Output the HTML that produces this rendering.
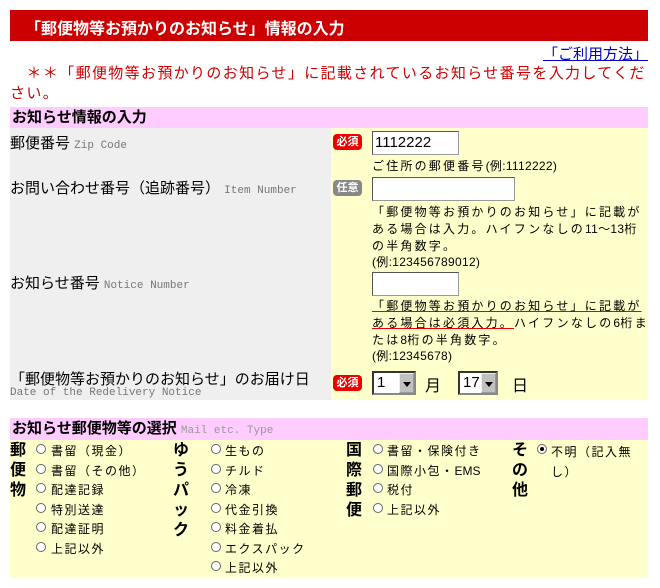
<!DOCTYPE html>
<html><head><meta charset="utf-8"><style>
*{margin:0;padding:0;box-sizing:border-box}
body{width:660px;height:588px;background:#fff;position:relative;font-family:"Liberation Sans","Noto Sans CJK JP",sans-serif;color:#000;overflow:hidden}
.a{position:absolute;white-space:nowrap}
.mono{font-family:"Liberation Mono","Noto Sans CJK JP",monospace;color:#777;font-size:11px}
.note{font-size:12px;line-height:17px;letter-spacing:2.2px}
.note .n{letter-spacing:0.3px}
.badge{position:absolute;width:29px;height:16px;border-radius:4px;color:#fff;font-size:11px;font-weight:bold;text-align:center;line-height:16px}
.inp{position:absolute;background:#fff;border:1px solid #999;border-top-color:#555;border-left-color:#555;font-size:15px;padding-left:2px;line-height:21px}
.sel{position:absolute;background:#fff;border:2px inset #888;font-size:15px;height:24px;line-height:20px;padding-left:3px}
.sel b{position:absolute;right:0;top:0;width:15px;height:20px;background:#c0c0c0;border:1px outset #eee}
.sel b:after{content:"";position:absolute;left:3px;top:8px;border:4px solid transparent;border-top:5px solid #000;border-bottom:0}
.r{position:absolute;width:10px;height:10px;border:1px solid #666;border-radius:50%;background:#fff}
.rl{position:absolute;font-size:12px;white-space:nowrap;letter-spacing:1.5px}
.v{position:absolute;font-size:16px;font-weight:bold;line-height:20px;width:18px}
</style></head><body>
<div class="a" style="left:10px;top:10px;width:638px;height:31px;background:#cc0000"></div>
<div class="a" style="left:25px;top:15px;color:#fff;font-size:16px;font-weight:bold">「郵便物等お預かりのお知らせ」情報の入力</div>
<div class="a" style="right:12px;top:43px;font-size:15px;color:#00c;text-decoration:underline">「ご利用方法」</div>
<div class="a" style="left:10px;top:64px;font-size:15px;color:#cc0000;line-height:20px;letter-spacing:1.35px">&nbsp;&nbsp;&nbsp;＊＊「郵便物等お預かりのお知らせ」に記載されているお知らせ番号を入力してくだ<br>さい。</div>
<div class="a" style="left:10px;top:107px;width:638px;height:21px;background:#fcf"></div>
<div class="a" style="left:12px;top:107px;font-size:15px;font-weight:bold;line-height:21px">お知らせ情報の入力</div>
<div class="a" style="left:10px;top:128px;width:321px;height:272px;background:#efefef"></div>
<div class="a" style="left:331px;top:128px;width:317px;height:272px;background:#ffffcc"></div>

<div class="a" style="left:10px;top:132px;font-size:15px">郵便番号 <span class="mono">Zip Code</span></div>
<div class="badge" style="left:333px;top:134px;background:#e00">必須</div>
<div class="inp" style="left:372px;top:131px;width:87px;height:24px">1112222</div>
<div class="a note" style="left:372px;top:158px">ご住所の郵便番号<span class="n">(例:1112222)</span></div>

<div class="a" style="left:10px;top:177px;font-size:15px">お問い合わせ番号（追跡番号） <span class="mono">Item Number</span></div>
<div class="badge" style="left:333px;top:180px;background:#888">任意</div>
<div class="inp" style="left:372px;top:177px;width:143px;height:24px"></div>
<div class="a note" style="left:372px;top:204px">「郵便物等お預かりのお知らせ」に記載が<br>ある場合は入力。ハイフンなしの<span class="n">11～13</span>桁<br>の半角数字。</div>
<div class="a note" style="left:372px;top:254px"><span class="n">(例:123456789012)</span></div>

<div class="a" style="left:10px;top:272px;font-size:15px">お知らせ番号 <span class="mono">Notice Number</span></div>
<div class="inp" style="left:372px;top:272px;width:87px;height:24px"></div>
<div class="a note" style="left:372px;top:298px"><span style="text-decoration:underline;text-decoration-color:#e00">「郵便物等お預かりのお知らせ」に記載が<br>ある場合は必須入力。</span>ハイフンなしの<span class="n">6</span>桁ま<br>たは<span class="n">8</span>桁の半角数字。</div>
<div class="a note" style="left:372px;top:348px"><span class="n">(例:12345678)</span></div>

<div class="a" style="left:10px;top:368px;font-size:15px">「郵便物等お預かりのお知らせ」のお届け日</div>
<div class="a mono" style="left:10px;top:387px">Date of the Redelivery Notice</div>
<div class="badge" style="left:333px;top:375px;background:#e00">必須</div>
<div class="sel" style="left:372px;top:371px;width:44px">1<b></b></div>
<div class="a" style="left:425px;top:372px;font-size:16px">月</div>
<div class="sel" style="left:458px;top:371px;width:40px">17<b></b></div>
<div class="a" style="left:512px;top:372px;font-size:16px">日</div>

<div class="a" style="left:10px;top:418px;width:638px;height:22px;background:#fcf"></div>
<div class="a" style="left:12px;top:418px;font-size:15px;font-weight:bold;line-height:22px">お知らせ郵便物等の選択 <span class="mono" style="font-weight:normal;color:#999">Mail etc. Type</span></div>
<div class="a" style="left:10px;top:440px;width:638px;height:138px;background:#ffffcc"></div>

<div class="v" style="left:10px;top:441px">郵便物</div>
<div class="v" style="left:173px;top:441px">ゆうパック</div>
<div class="v" style="left:346px;top:441px">国際郵便</div>
<div class="v" style="left:512px;top:441px">その他</div>

<div class="r" style="left:36px;top:444px"></div><div class="rl" style="left:51px;top:442px">書留（現金）</div>
<div class="r" style="left:36px;top:464px"></div><div class="rl" style="left:51px;top:462px">書留（その他）</div>
<div class="r" style="left:36px;top:483px"></div><div class="rl" style="left:51px;top:481px">配達記録</div>
<div class="r" style="left:36px;top:503px"></div><div class="rl" style="left:51px;top:501px">特別送達</div>
<div class="r" style="left:36px;top:522px"></div><div class="rl" style="left:51px;top:520px">配達証明</div>
<div class="r" style="left:36px;top:542px"></div><div class="rl" style="left:51px;top:540px">上記以外</div>

<div class="r" style="left:211px;top:444px"></div><div class="rl" style="left:225px;top:442px">生もの</div>
<div class="r" style="left:211px;top:464px"></div><div class="rl" style="left:225px;top:462px">チルド</div>
<div class="r" style="left:211px;top:483px"></div><div class="rl" style="left:225px;top:481px">冷凍</div>
<div class="r" style="left:211px;top:503px"></div><div class="rl" style="left:225px;top:501px">代金引換</div>
<div class="r" style="left:211px;top:522px"></div><div class="rl" style="left:225px;top:520px">料金着払</div>
<div class="r" style="left:211px;top:542px"></div><div class="rl" style="left:225px;top:540px">エクスパック</div>
<div class="r" style="left:211px;top:561px"></div><div class="rl" style="left:225px;top:559px">上記以外</div>

<div class="r" style="left:373px;top:444px"></div><div class="rl" style="left:387px;top:442px">書留・保険付き</div>
<div class="r" style="left:373px;top:464px"></div><div class="rl" style="left:387px;top:462px">国際小包・<span style="letter-spacing:0">EMS</span></div>
<div class="r" style="left:373px;top:483px"></div><div class="rl" style="left:387px;top:481px">税付</div>
<div class="r" style="left:373px;top:503px"></div><div class="rl" style="left:387px;top:501px">上記以外</div>

<div class="r" style="left:537px;top:444px"><div style="position:absolute;left:2px;top:2px;width:4px;height:4px;border-radius:50%;background:#000"></div></div>
<div class="rl" style="left:551px;top:442px;line-height:20px">不明（記入無<br>し）</div>
</body></html>
